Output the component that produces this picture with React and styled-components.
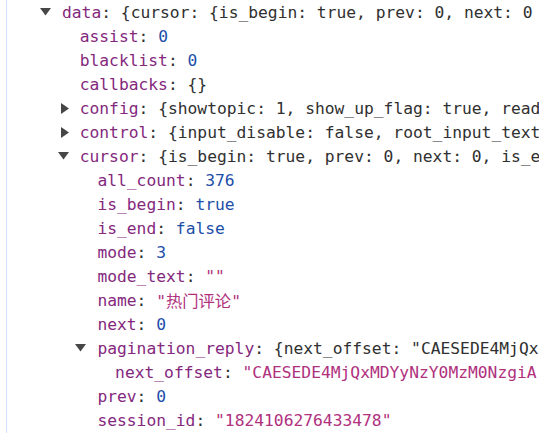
import React from "react";
import styled, { createGlobalStyle } from "styled-components";

const GlobalStyle = createGlobalStyle`
  html, body {
    margin: 0;
    padding: 0;
    background: #ffffff;
  }
`;

const Panel = styled.div`
  margin-left: 6px;
  height: 433px;
  border-left: 1px solid #d3e3fd;
  overflow: hidden;
  font-family: "DejaVu Sans Mono", "Liberation Mono", "Noto Sans CJK SC", monospace;
  font-size: 16.3px;
  color: #303030;
`;

const Row = styled.div`
  display: flex;
  align-items: center;
  height: 24px;
  white-space: nowrap;
  padding-left: ${(props) => 55 + props.level * 17.7}px;

  & > * {
    flex-shrink: 0;
  }
`;

const Arrow = styled.span`
  display: inline-flex;
  align-items: center;
  width: 22px;
  margin-left: -22px;
  padding-left: ${(props) => (props.open ? 0 : 3)}px;
  box-sizing: border-box;
`;

const Key = styled.span`
  color: #84287e;
`;

const Punct = styled.span`
  color: #303030;
`;

const Num = styled.span`
  color: #1d4fa8;
`;

const Str = styled.span`
  color: #b0317e;
`;

const Preview = styled.span`
  color: #303030;
`;

const Triangle = ({ open }) => (
  <Arrow open={open}>
    {open ? (
      <svg width="11" height="8" viewBox="0 0 11 8">
        <path d="M0 0 L11 0 L5.5 7.5 Z" fill="#474747" />
      </svg>
    ) : (
      <svg width="8" height="11" viewBox="0 0 8 11">
        <path d="M0 0 L8 5.5 L0 11 Z" fill="#474747" />
      </svg>
    )}
  </Arrow>
);

const Value = ({ type, children }) => {
  if (type === "num") return <Num>{children}</Num>;
  if (type === "str") return <Str>{children}</Str>;
  return <Preview>{children}</Preview>;
};

const rows = [
  { level: 0, key: "data", arrow: "open", value: "{cursor: {is_begin: true, prev: 0, next: 0" },
  { level: 1, key: "assist", value: "0", type: "num" },
  { level: 1, key: "blacklist", value: "0", type: "num" },
  { level: 1, key: "callbacks", value: "{}" },
  { level: 1, key: "config", arrow: "closed", value: "{showtopic: 1, show_up_flag: true, read" },
  { level: 1, key: "control", arrow: "closed", value: "{input_disable: false, root_input_text" },
  { level: 1, key: "cursor", arrow: "open", value: "{is_begin: true, prev: 0, next: 0, is_e" },
  { level: 2, key: "all_count", value: "376", type: "num" },
  { level: 2, key: "is_begin", value: "true", type: "num" },
  { level: 2, key: "is_end", value: "false", type: "num" },
  { level: 2, key: "mode", value: "3", type: "num" },
  { level: 2, key: "mode_text", value: "\"\"", type: "str" },
  { level: 2, key: "name", value: "\"热门评论\"", type: "str" },
  { level: 2, key: "next", value: "0", type: "num" },
  { level: 2, key: "pagination_reply", arrow: "open", value: "{next_offset: \"CAESEDE4MjQx" },
  { level: 3, key: "next_offset", value: "\"CAESEDE4MjQxMDYyNzY0MzM0NzgiA", type: "str" },
  { level: 2, key: "prev", value: "0", type: "num" },
  { level: 2, key: "session_id", value: "\"1824106276433478\"", type: "str" },
];

const App = () => (
  <>
    <GlobalStyle />
    <Panel>
      {rows.map((row, index) => (
        <Row key={index} level={row.level}>
          {row.arrow && <Triangle open={row.arrow === "open"} />}
          <Key>{row.key}</Key>
          <Punct>:&nbsp;</Punct>
          <Value type={row.type}>{row.value}</Value>
        </Row>
      ))}
    </Panel>
  </>
);

export default App;
